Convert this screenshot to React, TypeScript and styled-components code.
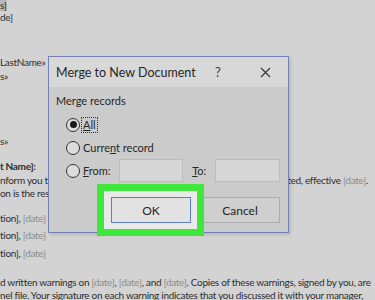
import React from 'react';
import styled, { createGlobalStyle } from 'styled-components';

const GlobalStyle = createGlobalStyle`
  html, body {
    margin: 0;
    padding: 0;
    background: #d3d3d3;
    overflow: hidden;
  }
`;

const Page = styled.div`
  position: relative;
  width: 375px;
  height: 300px;
  overflow: hidden;
  background: #d3d3d3;
`;

// the letter behind the dialog
const Doc = styled.div`
  margin-top: -1px;
  font-family: Lato, 'Liberation Sans', sans-serif;
  font-size: 10px;
  letter-spacing: -0.3px;
  line-height: 13px;
  color: #2e2e2e;
`;

const Line = styled.div<{ $gap?: number; $bold?: boolean }>`
  display: flex;
  justify-content: space-between;
  white-space: nowrap;
  margin-top: ${(p) => p.$gap ?? 0}px;
  padding-right: 7px;
  font-weight: ${(p) => (p.$bold ? 700 : 400)};
`;

const Field = styled.span`
  color: #8c8c8c;
`;

const Shaded = styled.span`
  background: #b9b9b9;
`;

const Dialog = styled.div`
  position: absolute;
  left: 48px;
  top: 56px;
  width: 239px;
  height: 175px;
  border: 1px solid #7580b4;
  background: #cbcbcb;
  box-shadow: 2px 2px 3px rgba(0, 0, 0, 0.12);
  font-family: Lato, 'Noto Sans', sans-serif;
  color: #262626;
  display: flex;
  flex-direction: column;
`;

const TitleBar = styled.div`
  height: 30px;
  background: #d8d8d8;
  display: flex;
  align-items: center;
  padding: 0 8px 0 7px;
  font-size: 12.5px;
  white-space: nowrap;
`;

const Title = styled.span`
  flex: 1;
  min-width: 0;
`;

const TitleIcon = styled.span<{ $width: number; $gap?: number }>`
  flex: none;
  width: ${(p) => p.$width}px;
  margin-left: ${(p) => p.$gap ?? 0}px;
  display: flex;
  justify-content: center;
  font-size: 13px;
  color: #3a3a3a;
`;

const Body = styled.div`
  flex: 1;
  display: flex;
  flex-direction: column;
  padding: 5px 8px 0 7px;
  font-size: 11px;
`;

const Legend = styled.div`
  height: 17px;
  line-height: 17px;
`;

const Options = styled.div`
  display: flex;
  flex-direction: column;
  gap: 6px;
  padding: 7px 0 0 10px;
`;

const OptionRow = styled.div`
  height: 17px;
  display: flex;
  align-items: center;
  white-space: nowrap;
`;

const Radio = styled.span<{ $checked?: boolean }>`
  flex: none;
  width: 12px;
  height: 12px;
  border-radius: 50%;
  border: 1px solid #333;
  background: #dcdcdc;
  display: flex;
  align-items: center;
  justify-content: center;
  margin-right: 2px;
  &::after {
    content: '';
    width: 7px;
    height: 7px;
    border-radius: 50%;
    background: ${(p) => (p.$checked ? '#1a1a1a' : 'transparent')};
  }
`;

const Label = styled.span<{ $focused?: boolean; $width?: number }>`
  padding: 0 1px;
  line-height: 14px;
  width: ${(p) => (p.$width ? `${p.$width}px` : 'auto')};
  outline: ${(p) => (p.$focused ? '1px dotted #333' : 'none')};
`;

const Key = styled.span`
  text-decoration: underline;
`;

const Input = styled.div<{ $width: number }>`
  flex: none;
  width: ${(p) => p.$width}px;
  height: 21px;
  background: #d6d6d6;
  border: 1px solid #bcbcbc;
`;

const RangeLabel = styled.span`
  width: 24px;
  padding-left: 9px;
`;

const ButtonRow = styled.div`
  display: flex;
  justify-content: flex-end;
  align-items: center;
  gap: 3px;
  margin-top: 12px;
`;

const Highlight = styled.div`
  position: relative;
  z-index: 1;
  padding: 6px 6px 6px 7px;
  background: #e8e9e8;
  box-shadow: 0 0 0 7px #3fe63b;
`;

const Button = styled.div<{ $primary?: boolean }>`
  width: 78px;
  height: 24px;
  display: flex;
  align-items: center;
  justify-content: center;
  font-size: 12px;
  background: ${(p) => (p.$primary ? '#e2e2e2' : '#cfcfcf')};
  border: 1px solid ${(p) => (p.$primary ? '#5a7fc4' : '#ababab')};
`;

const App: React.FC = () => {
  return (
    <Page>
      <GlobalStyle />
      <Doc>
        <Line>
          <span>
            <Shaded>s]</Shaded>
          </span>
        </Line>
        <Line $gap={-1}>de]</Line>
        <Line $gap={32}>LastName»</Line>
        <Line $gap={1}>s»</Line>
        <Line $gap={52}>s»</Line>
        <Line $gap={12} $bold>
          t Name]:
        </Line>
        <Line $gap={1}>
          <span>nform you th</span>
          <span>
            ted, effective <Field>[date]</Field>.
          </span>
        </Line>
        <Line>on is the res</Line>
        <Line $gap={12}>
          <span>
            tion], <Field>[date]</Field>
          </span>
        </Line>
        <Line $gap={4}>
          <span>
            tion], <Field>[date]</Field>
          </span>
        </Line>
        <Line $gap={5}>
          <span>
            tion], <Field>[date]</Field>
          </span>
        </Line>
        <Line $gap={16}>
          <span>
            d written warnings on <Field>[date]</Field>, <Field>[date]</Field>, and{' '}
            <Field>[date]</Field>. Copies of these warnings, signed by you, are
          </span>
        </Line>
        <Line>
          <span>
            nel file. Your signature on each warning indicates that you discussed it with your
            manager,
          </span>
        </Line>
      </Doc>

      <Dialog>
        <TitleBar>
          <Title>Merge to New Document</Title>
          <TitleIcon $width={20}>?</TitleIcon>
          <TitleIcon $width={30} $gap={22}>
            <svg width="11" height="11" viewBox="0 0 11 11">
              <path d="M1 1 L10 10 M10 1 L1 10" stroke="#333" strokeWidth="1.1" fill="none" />
            </svg>
          </TitleIcon>
        </TitleBar>
        <Body>
          <Legend>Merge records</Legend>
          <Options>
            <OptionRow>
              <Radio $checked />
              <Label $focused>
                <Key>A</Key>ll
              </Label>
            </OptionRow>
            <OptionRow>
              <Radio />
              <Label>
                Curre<Key>n</Key>t record
              </Label>
            </OptionRow>
            <OptionRow>
              <Radio />
              <Label $width={37}>
                <Key>F</Key>rom:
              </Label>
              <Input $width={62} />
              <RangeLabel>
                <Key>T</Key>o:
              </RangeLabel>
              <Input $width={63} />
            </OptionRow>
          </Options>
          <ButtonRow>
            <Highlight>
              <Button $primary>OK</Button>
            </Highlight>
            <Button>Cancel</Button>
          </ButtonRow>
        </Body>
      </Dialog>
    </Page>
  );
};

export default App;
